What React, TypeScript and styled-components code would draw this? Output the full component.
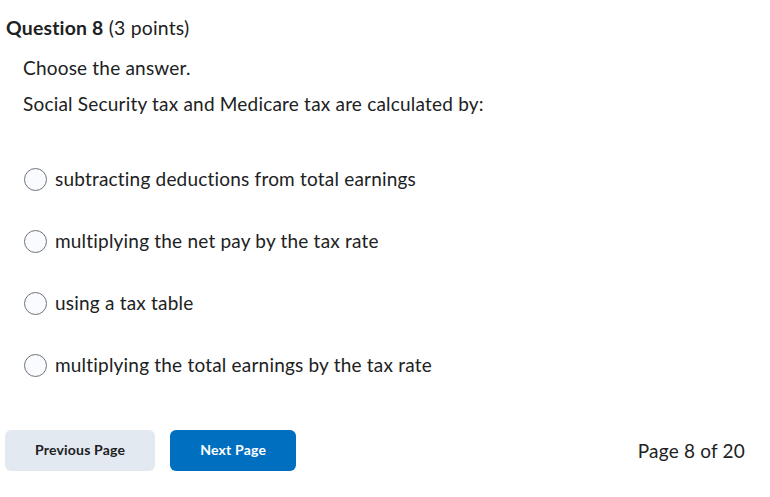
import React from "react";
import styled, { createGlobalStyle } from "styled-components";

const Global = createGlobalStyle`
  html, body { margin: 0; padding: 0; background: #ffffff; }
  body {
    font-family: Lato, "Open Sans", sans-serif;
    color: #202122;
    font-variant-ligatures: none;
    letter-spacing: 0.2px;
  }
`;

const Page = styled.div`
  width: 770px;
  height: 497px;
  box-sizing: border-box;
  padding: 14px 25px 0 5px;
  display: flex;
  flex-direction: column;
`;

const Heading = styled.h2`
  margin: 0;
  font-size: 19.4px;
  line-height: 28px;
  font-weight: 400;
  padding-left: 1px;
`;

const Bold = styled.span`
  font-weight: 700;
`;

const Body = styled.div`
  padding-left: 18px;
  margin-top: 12px;
  display: flex;
  flex-direction: column;
`;

const Para = styled.p`
  margin: 0 0 8px 0;
  font-size: 19px;
  line-height: 28px;
`;

const Options = styled.div`
  margin-top: 39px;
  display: flex;
  flex-direction: column;
  gap: 34px;
`;

const Option = styled.label`
  display: flex;
  align-items: center;
  gap: 8px;
  font-size: 19px;
  line-height: 28px;
  cursor: pointer;
`;

const Radio = styled.span`
  width: 23px;
  height: 23px;
  box-sizing: border-box;
  border-radius: 50%;
  border: 1px solid #6e7477;
  background: #f9fbff;
  flex: none;
  margin-left: 1px;
`;

const Footer = styled.div`
  margin-top: 51px;
  display: flex;
  align-items: center;
  gap: 15px;
`;

const Button = styled.button<{ $primary?: boolean }>`
  height: 41px;
  border: none;
  border-radius: 6px;
  padding: 0 30px 2px;
  font-family: Lato, "Open Sans", sans-serif;
  font-size: 14px;
  font-weight: 700;
  letter-spacing: 0.2px;
  background: ${(p) => (p.$primary ? "#006fbf" : "#e3e9f1")};
  color: ${(p) => (p.$primary ? "#ffffff" : "#202122")};
  cursor: pointer;
`;

const PageInfo = styled.div`
  margin-left: auto;
  font-size: 19px;
  line-height: 28px;
`;

const options = [
  "subtracting deductions from total earnings",
  "multiplying the net pay by the tax rate",
  "using a tax table",
  "multiplying the total earnings by the tax rate",
];

export default function App() {
  return (
    <>
      <Global />
      <Page>
        <Heading>
          <Bold>Question 8</Bold> (3 points)
        </Heading>
        <Body>
          <Para>Choose the answer.</Para>
          <Para>Social Security tax and Medicare tax are calculated by:</Para>
          <Options>
            {options.map((o) => (
              <Option key={o}>
                <Radio />
                {o}
              </Option>
            ))}
          </Options>
        </Body>
        <Footer>
          <Button>Previous Page</Button>
          <Button $primary>Next Page</Button>
          <PageInfo>Page 8 of 20</PageInfo>
        </Footer>
      </Page>
    </>
  );
}
